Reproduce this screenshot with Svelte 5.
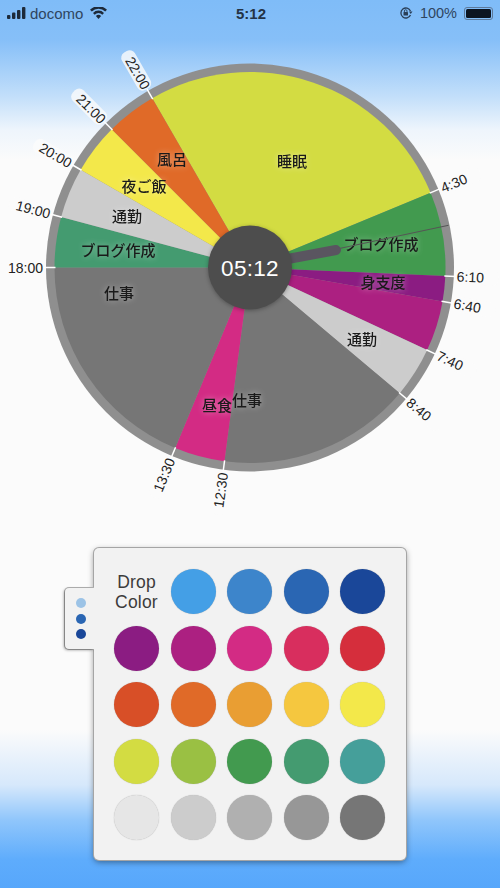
<script>
	const cx = 250;
	const cy = 267.5;
	const inner = 195.5;
	const outer = 204;

	// angles are degrees clockwise from the top, 15deg per hour
	const hour = (h, m = 0) => (h + m / 60) * 15;

	const slices = [
		{ from: hour(22), to: hour(28, 30), color: '#d3dc42' },
		{ from: hour(4, 30), to: hour(6, 10), color: '#429a4f' },
		{ from: hour(6, 10), to: hour(6, 40), color: '#8b1c82' },
		{ from: hour(6, 40), to: hour(7, 40), color: '#ac2081' },
		{ from: hour(7, 40), to: hour(8, 40), color: '#cccccc' },
		{ from: hour(8, 40), to: hour(12, 30), color: '#767676' },
		{ from: hour(12, 30), to: hour(13, 30), color: '#d32b84' },
		{ from: hour(13, 30), to: hour(18), color: '#767676' },
		{ from: hour(18), to: hour(19), color: '#449b70' },
		{ from: hour(19), to: hour(20), color: '#cccccc' },
		{ from: hour(20), to: hour(21), color: '#f3e84a' },
		{ from: hour(21), to: hour(22), color: '#e06a28' }
	];

	const names = [
		{ text: '睡眠', x: 292, y: 162 },
		{ text: '風呂', x: 172, y: 160 },
		{ text: '夜ご飯', x: 144, y: 187 },
		{ text: '通勤', x: 127, y: 217 },
		{ text: 'ブログ作成', x: 118, y: 251 },
		{ text: '仕事', x: 119, y: 294 },
		{ text: '昼食', x: 217, y: 406 },
		{ text: '仕事', x: 247, y: 401 },
		{ text: '通勤', x: 362, y: 340 },
		{ text: '身支度', x: 383, y: 283 },
		{ text: 'ブログ作成', x: 381, y: 245 }
	];

	const ticks = [
		['4:30', 4, 30], ['6:10', 6, 10], ['6:40', 6, 40], ['7:40', 7, 40], ['8:40', 8, 40],
		['12:30', 12, 30], ['13:30', 13, 30], ['18:00', 18, 0], ['19:00', 19, 0],
		['20:00', 20, 0], ['21:00', 21, 0], ['22:00', 22, 0]
	].map(([text, h, m]) => ({ text, angle: hour(h, m) }));

	const colors = [
		'#449fe6', '#3d85cb', '#2a66b3', '#1a4799',
		'#8b1c82', '#ac2081', '#d32b84', '#d82e5e', '#d52e3c',
		'#d84f27', '#e06a28', '#e99e33', '#f5c73f', '#f3e84a',
		'#d3dc42', '#9ac043', '#429a4f', '#449b70', '#459f9a',
		'#e6e6e6', '#cccccc', '#b0b0b0', '#979797', '#767676'
	];

	function point(angle, r) {
		const a = ((angle - 90) * Math.PI) / 180;
		return [cx + r * Math.cos(a), cy + r * Math.sin(a)];
	}

	function wedge(from, to) {
		const [x1, y1] = point(from, inner);
		const [x2, y2] = point(to, inner);
		const large = to - from > 180 ? 1 : 0;
		return `M${cx} ${cy}L${x1} ${y1}A${inner} ${inner} 0 ${large} 1 ${x2} ${y2}Z`;
	}

	function tickLine(angle) {
		const [x1, y1] = point(angle, inner - 1);
		const [x2, y2] = point(angle, outer + 2);
		return { x1, y1, x2, y2 };
	}

	function labelTransform(angle) {
		const [x, y] = point(angle, outer + 3);
		const rot = angle < 180 ? angle - 90 : angle - 270;
		return `translate(${x} ${y}) rotate(${rot})`;
	}

	const handEnd = point(78, 203);
</script>

<div class="page">
	<header class="status">
		<div class="left">
			<svg width="19" height="12" viewBox="0 0 19 12">
				<rect x="0" y="8" width="3.400" height="4" rx="1" />
				<rect x="5" y="5.500" width="3.400" height="6.500" rx="1" />
				<rect x="10" y="3" width="3.400" height="9" rx="1" />
				<rect x="15" y="0" width="3.400" height="12" rx="1" />
			</svg>
			<span>docomo</span>
			<svg class="wifi" width="17" height="12" viewBox="0 0 17 12">
				<path d="M8.500 12 5.900 9a3.600 3.600 0 0 1 5.200 0Z" />
				<path d="M4.700 7.700 3 5.900a7.600 7.600 0 0 1 11 0l-1.700 1.800a5.300 5.300 0 0 0-7.600 0Z" />
				<path d="M1.800 4.600 0 2.800a11.800 11.800 0 0 1 17 0l-1.800 1.800a9.400 9.400 0 0 0-13.400 0Z" />
			</svg>
		</div>
		<div class="clock">5:12</div>
		<div class="right">
			<svg width="14" height="14" viewBox="0 0 14 14">
				<path d="M11.500 9A5 5 0 1 1 11.500 5" fill="none" stroke="#2a3f58" stroke-width="1.300" />
				<path d="M10 5.500h3.500L11.700 8Z" fill="#2a3f58" />
				<rect x="4.500" y="6" width="4.500" height="3.500" rx=".6" fill="#2a3f58" />
				<path d="M5.400 6V5a1.300 1.300 0 0 1 2.600 0v1" fill="none" stroke="#2a3f58" stroke-width=".9" />
			</svg>
			<span class="pct">100%</span>
			<div class="battery"><i></i></div>
		</div>
	</header>

	<svg class="wheel" width="500" height="504" viewBox="0 26 500 504">
		<circle {cx} {cy} r={outer} fill="#8f8f8f" />
		{#each slices as s}
			<path d={wedge(s.from, s.to)} fill={s.color} />
		{/each}
		{#each ticks as t}
			<line {...tickLine(t.angle)} stroke="#fff" stroke-width="1.500" />
			<g transform={labelTransform(t.angle)}>
				<rect
					x={t.angle < 180 ? -1 : -42}
					y="-7.500"
					width="43"
					height="15"
					rx="6"
					fill="#fbfbfb"
					opacity=".8"
				/>
				<text class="time" y="5" text-anchor={t.angle < 180 ? 'start' : 'end'}>{t.text}</text>
			</g>
		{/each}
		{#each names as n}
			<text class="name" x={n.x} y={n.y + 5} text-anchor="middle">{n.text}</text>
		{/each}
		<line x1={cx} y1={cy} x2={handEnd[0]} y2={handEnd[1]} stroke="#555" stroke-width="1" />
		<line class="hand" x1="285" y1="259.500" x2="336" y2="250" />
		<circle class="hub" {cx} {cy} r="42" />
		<text class="now" x={cx} y={cy + 8.500} text-anchor="middle">05:12</text>
	</svg>

	<section class="panel">
		<div class="tab">
			<i class="light"></i>
			<i class="mid"></i>
			<i class="dark"></i>
		</div>
		<div class="grid">
			<div class="drop">Drop<br />Color</div>
			{#each colors as c}
				<div class="swatch" style="background: {c}"></div>
			{/each}
		</div>
	</section>
</div>

<style>
	:global(body) {
		margin: 0;
		background: #fbfbfb;
	}
	.page {
		width: 500px;
		height: 888px;
		overflow: hidden;
		font-family: 'Liberation Sans', Arial, sans-serif;
		background: linear-gradient(
			to bottom,
			#7fbcf8 0,
			#86bff8 40px,
			#c3dffa 97px,
			#eef5fc 130px,
			#fbfbfb 160px,
			#fbfbfb 730px,
			#d6e8fb 785px,
			#90c6fb 820px,
			#5eacfc 860px,
			#57a7fb 888px
		);
	}
	.status {
		display: grid;
		grid-template-columns: 1fr auto 1fr;
		align-items: center;
		height: 26px;
		padding: 0 7px;
		color: #2f455f;
		font-size: 15px;
		width: 486px;
	}
	.status svg {
		fill: #1d2a3a;
	}
	.left {
		display: flex;
		align-items: center;
		gap: 4px;
	}
	.wifi {
		margin-left: 3px;
	}
	.clock {
		font-weight: 700;
		font-size: 15px;
		color: #243345;
		margin-left: 2px;
	}
	.right {
		display: flex;
		align-items: center;
		justify-content: flex-end;
		gap: 7px;
	}
	.pct {
		font-size: 14.500px;
	}
	.battery {
		width: 29px;
		height: 13px;
		padding: 1px;
		box-sizing: border-box;
		border: 1px solid #5d7a9c;
		border-radius: 3px;
	}
	.battery i {
		display: block;
		height: 100%;
		background: #0c1420;
		border-radius: 1.500px;
	}
	.wheel {
		display: block;
	}
	.time {
		font-size: 14px;
		fill: #222;
	}
	.name {
		font-family: 'Noto Sans CJK JP', sans-serif;
		font-size: 15px;
		font-weight: 500;
		fill: #1a1a1a;
		filter: drop-shadow(0 0 3px rgba(255, 255, 255, 0.45));
	}
	.hand {
		stroke: #5a5560;
		stroke-width: 10;
		stroke-linecap: round;
		filter: blur(0.6px);
	}
	.hub {
		fill: #4d4d4d;
		filter: drop-shadow(0 1px 2px rgba(0, 0, 0, 0.3));
	}
	.now {
		font-size: 22.500px;
		fill: #fff;
		letter-spacing: 0.3px;
	}
	.panel {
		position: relative;
		width: 312px;
		height: 312px;
		box-sizing: border-box;
		margin: 18px 0 0 94px;
		padding: 21px 0 0 20px;
		background: #f2f2f2;
		border-radius: 5px;
		box-shadow: 0 0 0 1px #a5a5a5, 0 2px 6px rgba(0, 0, 0, 0.45);
	}
	.tab {
		position: absolute;
		left: -29px;
		top: 40px;
		width: 29px;
		height: 61px;
		display: flex;
		flex-direction: column;
		align-items: center;
		justify-content: center;
		gap: 5.500px;
		padding-left: 3px;
		box-sizing: border-box;
		background: #f2f2f2;
		border-radius: 4px 0 0 4px;
		box-shadow: -1px 1px 3px rgba(0, 0, 0, 0.4), 0 0 0 1px #b5b5b5;
		clip-path: inset(-6px 0 -6px -6px);
	}
	.tab i {
		width: 10px;
		height: 10px;
		border-radius: 50%;
	}
	.tab .light {
		background: #9cc3e6;
	}
	.tab .mid {
		background: #2a66b3;
	}
	.tab .dark {
		background: #1a4799;
	}
	.grid {
		display: grid;
		grid-template-columns: repeat(5, 45px);
		grid-auto-rows: 45px;
		gap: 11.500px;
	}
	.drop {
		align-self: center;
		justify-self: center;
		text-align: center;
		font-size: 17.500px;
		letter-spacing: 0.2px;
		line-height: 20px;
		color: #3c3c3c;
	}
	.swatch {
		border-radius: 50%;
		box-shadow: 0 0 1px rgba(0, 0, 0, 0.3);
	}
</style>
